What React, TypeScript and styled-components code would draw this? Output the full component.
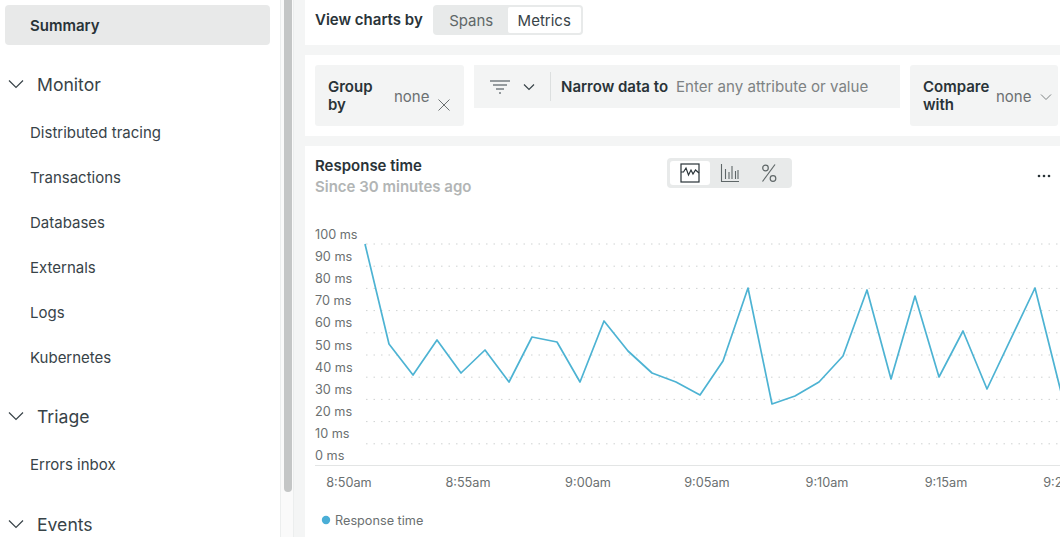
import React from "react";
import styled, { createGlobalStyle } from "styled-components";

const Global = createGlobalStyle`
  html, body { margin: 0; padding: 0; height: 537px; overflow: hidden; background: #f4f5f5; }
  #root { height: 537px; }
  * { box-sizing: border-box; }
  body { font-family: Inter, "Liberation Sans", sans-serif; color: #293338; }
`;

const Page = styled.div`
  display: grid;
  grid-template-columns: 280px 15px 755px;
  column-gap: 0;
  height: 537px;
  width: 1060px;
  overflow: hidden;
`;

const Sidebar = styled.nav`
  background: #fff;
  border-right: 1px solid #eceeee;
  width: 281px;
  padding: 5px 10px 0 5px;
  height: 537px;
  overflow: hidden;
`;

const SummaryItem = styled.div`
  height: 40px;
  width: 265px;
  border-radius: 4px;
  background: #e8e9e9;
  display: flex;
  align-items: center;
  padding-left: 25px;
  font-size: 15px;
  font-weight: 600;
  color: #293338;
`;

const SectionHead = styled.div<{ $top: number }>`
  height: 40px;
  margin-top: ${(p) => p.$top}px;
  display: flex;
  align-items: center;
  padding-left: 3px;
  gap: 13px;
  font-size: 17.6px;
  color: #384348;
`;

const NavList = styled.div`
  margin-top: 6px;
  display: flex;
  flex-direction: column;
`;

const NavItem = styled.div`
  height: 45px;
  display: flex;
  align-items: center;
  padding-left: 25px;
  font-size: 15px;
  color: #384348;
`;

const ScrollTrack = styled.div`
  background: #fafafa;
  margin-left: 1px;
  border-right: 1px solid #eceeee;
  width: 13px;
  height: 537px;
  padding-left: 3px;
`;

const ScrollThumb = styled.div`
  width: 8px;
  height: 492px;
  background: #c4c6c6;
  border-radius: 0 0 4px 4px;
`;

const Main = styled.main`
  margin-left: 10px;
  width: 755px;
  display: flex;
  flex-direction: column;
  gap: 10px;
  height: 537px;
  overflow: hidden;
`;

const ViewCard = styled.section`
  background: #fff;
  height: 45px;
  display: flex;
  align-items: flex-start;
  padding: 5px 0 0 10px;
  gap: 10px;
  flex: none;
`;

const ViewLabel = styled.span`
  font-size: 15px;
  font-weight: 600;
  line-height: 30px;
`;

const Segment = styled.div<{ $w: number }>`
  display: flex;
  background: #e8eaea;
  border-radius: 4px;
  padding: 2px;
  height: 30px;
  width: ${(p) => p.$w}px;
`;

const SegText = styled.div<{ $active?: boolean }>`
  width: 73px;
  display: flex;
  align-items: center;
  justify-content: center;
  font-size: 15px;
  border-radius: 2px;
  background: ${(p) => (p.$active ? "#fff" : "transparent")};
  color: ${(p) => (p.$active ? "#384348" : "#5f6768")};
`;

const SegIcon = styled.div<{ $active?: boolean }>`
  width: 40px;
  display: flex;
  align-items: center;
  justify-content: center;
  border-radius: 3px;
  background: ${(p) => (p.$active ? "#fff" : "transparent")};
`;

const FilterCard = styled.section`
  background: #fff;
  height: 81px;
  flex: none;
  display: flex;
  align-items: flex-start;
  padding: 10px 0 0 10px;
  gap: 10px;
`;

const DropBlock = styled.div<{ $w: number }>`
  width: ${(p) => p.$w}px;
  height: 61px;
  background: #f3f4f4;
  border-radius: 3px;
  display: flex;
  align-items: center;
  padding-left: 13px;
  flex: none;
`;

const DropLabel = styled.div<{ $w: number; $gap: number }>`
  font-size: 15px;
  font-weight: 600;
  line-height: 18px;
  width: ${(p) => p.$w}px;
  margin-right: ${(p) => p.$gap}px;
  color: #293338;
`;

const DropValue = styled.span`
  font-size: 15px;
  color: #6b7071;
  margin-top: 1px;
`;

const ClearIcon = styled.svg`
  margin: 19px 0 0 9px;
  flex: none;
`;

const ValueChevron = styled.svg`
  margin: 3px 0 0 9px;
  flex: none;
`;

const NarrowBlock = styled.div`
  width: 426px;
  height: 43px;
  background: #f3f4f4;
  display: flex;
  align-items: center;
  flex: none;
  padding-left: 16px;
`;

const NarrowDivider = styled.div`
  width: 1px;
  height: 29px;
  background: #dcdfdf;
  margin: 0 10px 0 15px;
`;

const NarrowLabel = styled.span`
  font-size: 15px;
  font-weight: 600;
  margin-right: 8px;
`;

const Placeholder = styled.span`
  font-size: 15.1px;
  color: #7d8283;
`;

const FunnelChevron = styled.svg`
  margin-left: 13px;
`;

const ChartCard = styled.section`
  background: #fff;
  flex: 1;
  min-height: 0;
  display: flex;
  flex-direction: column;
`;

const ChartHead = styled.div`
  height: 79px;
  flex: none;
  display: flex;
  align-items: flex-start;
  padding: 11px 0 0 10px;
`;

const Titles = styled.div`
  width: 352px;
  flex: none;
`;

const ChartTitle = styled.div`
  font-size: 15px;
  font-weight: 600;
  line-height: 18px;
  color: #293338;
`;

const ChartSub = styled.div`
  font-size: 15px;
  font-weight: 600;
  line-height: 18px;
  margin-top: 3px;
  color: #b2b5b5;
`;

const ChartToggle = styled(Segment)`
  padding: 3px;
  margin-top: 1px;
`;

const MoreDots = styled.svg`
  margin: 17px 0 0 245px;
  flex: none;
`;

const ChartSvg = styled.svg`
  display: block;
  flex: none;
  font-family: Inter, "Liberation Sans", sans-serif;
`;

const Chevron = () => (
  <svg width="16" height="16" viewBox="0 0 16 16" fill="none" stroke="#384348" strokeWidth="1.2">
    <path d="M1 4.5 L8 11.5 L15 4.5" />
  </svg>
);

const rows = ["Distributed tracing", "Transactions", "Databases", "Externals", "Logs", "Kubernetes"];
const yTicks = [100, 90, 80, 70, 60, 50, 40, 30, 20, 10, 0];
const xTicks = [
  ["8:50am", 349],
  ["8:55am", 468],
  ["9:00am", 588],
  ["9:05am", 707],
  ["9:10am", 827],
  ["9:15am", 946],
  ["9:20am", 1066],
] as const;
const points =
  "365,244 389,344 413,375 437,340 461,373 485,350 509,382 532,337 557,342 580,382 604,321 628,351 652,373 676,382 700,395 723,361 748,288 772,404 795,396 819,382 843,356 867,290 891,379 915,296 939,377 963,331 987,389 1035,288 1059,384 1061,392";

export default function App() {
  return (
    <Page>
      <Global />
      <Sidebar>
        <SummaryItem>Summary</SummaryItem>
        <SectionHead $top={19}>
          <Chevron />
          <span>Monitor</span>
        </SectionHead>
        <NavList>
          {rows.map((r) => (
            <NavItem key={r}>{r}</NavItem>
          ))}
        </NavList>
        <SectionHead $top={16}>
          <Chevron />
          <span>Triage</span>
        </SectionHead>
        <NavList>
          <NavItem>Errors inbox</NavItem>
        </NavList>
        <SectionHead $top={17}>
          <Chevron />
          <span>Events</span>
        </SectionHead>
      </Sidebar>
      <ScrollTrack>
        <ScrollThumb />
      </ScrollTrack>
      <Main>
        <ViewCard>
          <ViewLabel>View charts by</ViewLabel>
          <Segment $w={150}>
            <SegText>Spans</SegText>
            <SegText $active>Metrics</SegText>
          </Segment>
        </ViewCard>
        <FilterCard>
          <DropBlock $w={149}>
            <DropLabel $w={50} $gap={16}>Group by</DropLabel>
            <DropValue>none</DropValue>
            <ClearIcon width="12" height="12" viewBox="0 0 12 12" fill="none" stroke="#6b7071" strokeWidth="1">
              <path d="M0.5 0.5 L11.5 11.5 M11.5 0.5 L0.5 11.5" />
            </ClearIcon>
          </DropBlock>
          <NarrowBlock>
            <svg width="20" height="14" viewBox="0 0 20 14" fill="none" stroke="#384348" strokeWidth="1.2">
              <path d="M0 1 H20 M3 5 H17 M6 9 H14 M9 13 H11" />
            </svg>
            <FunnelChevron width="12" height="12" viewBox="0 0 12 12" fill="none" stroke="#384348" strokeWidth="1.2">
              <path d="M1 3.5 L6 8.5 L11 3.5" />
            </FunnelChevron>
            <NarrowDivider />
            <NarrowLabel>Narrow data to</NarrowLabel>
            <Placeholder>Enter any attribute or value</Placeholder>
          </NarrowBlock>
          <DropBlock $w={148}>
            <DropLabel $w={73} $gap={0}>Compare with</DropLabel>
            <DropValue>none</DropValue>
            <ValueChevron width="12" height="12" viewBox="0 0 12 12" fill="none" stroke="#7d8283" strokeWidth="1">
              <path d="M1 3.5 L6 8.5 L11 3.5" />
            </ValueChevron>
          </DropBlock>
        </FilterCard>
        <ChartCard>
          <ChartHead>
            <Titles>
              <ChartTitle>Response time</ChartTitle>
              <ChartSub>Since 30 minutes ago</ChartSub>
            </Titles>
            <ChartToggle $w={125}>
              <SegIcon $active>
                <svg width="20" height="20" viewBox="0 0 20 20" fill="none" stroke="#293338" strokeWidth="1.2">
                  <rect x="1" y="1" width="18" height="18" />
                  <path d="M1 9 H3.5 L6 5 L8.5 12 L11 7 L13 11 L15.5 7 L19 10" />
                </svg>
              </SegIcon>
              <SegIcon>
                <svg width="20" height="20" viewBox="0 0 20 20" fill="none" stroke="#5f6768" strokeWidth="1.1">
                  <path d="M1.5 1 V18.5 H19 M5.5 6 V16 M9 9 V16 M12 3 V16 M15.5 8 V16 M18 7 V16" />
                </svg>
              </SegIcon>
              <SegIcon>
                <svg width="20" height="20" viewBox="0 0 20 20" fill="none" stroke="#5f6768" strokeWidth="1.2">
                  <circle cx="6.5" cy="5" r="2.8" />
                  <circle cx="14" cy="15.5" r="2.8" />
                  <path d="M16 1.5 L3.5 18.5" />
                </svg>
              </SegIcon>
            </ChartToggle>
            <MoreDots width="14" height="4" viewBox="0 0 14 4" fill="#293338">
              <circle cx="2" cy="2" r="1.3" />
              <circle cx="7" cy="2" r="1.3" />
              <circle cx="12" cy="2" r="1.3" />
            </MoreDots>
          </ChartHead>
          <ChartSvg width="755" height="312" viewBox="305 225 755 312">
            {yTicks.map((t, i) => {
              const y = 244 + i * 22.2;
              return (
                <g key={t}>
                  {i < 10 && (
                    <line x1="366" x2="1060" y1={y} y2={y} stroke="#cfd2d2" strokeWidth="1" strokeDasharray="1.5 6" />
                  )}
                  <text x="315" y={239 + i * 22.1} fontSize="12.7" fill="#6b7071">
                    {t} ms
                  </text>
                </g>
              );
            })}
            <line x1="315" x2="1060" y1="465.5" y2="465.5" stroke="#e3e5e5" strokeWidth="1" />
            {xTicks.map(([t, x]) => (
              <text key={t} x={x} y="487" fontSize="12.7" textAnchor="middle" fill="#6b7071">
                {t}
              </text>
            ))}
            <polyline points={points} fill="none" stroke="#4db3d3" strokeWidth="1.7" strokeLinejoin="round" />
            <circle cx="326" cy="520" r="4.2" fill="#4aaed6" />
            <text x="335" y="525" fontSize="12.7" fill="#6b7071">
              Response time
            </text>
          </ChartSvg>
        </ChartCard>
      </Main>
    </Page>
  );
}
